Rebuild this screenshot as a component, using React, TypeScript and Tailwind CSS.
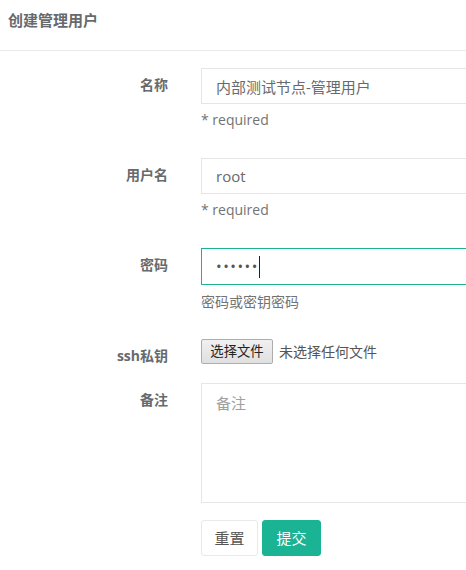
import React from 'react'

const font = "font-['Open_Sans','Noto_Sans_CJK_SC',sans-serif]"

function Label({ children }: { children: React.ReactNode }) {
  return (
    <div className="w-[168px] shrink-0 pt-[7px] text-right text-[14px] leading-5 font-bold text-[#676a6c]">
      {children}
    </div>
  )
}

export default function App() {
  return (
    <div className={`${font} w-[466px] h-[570px] overflow-hidden bg-white text-[#676a6c]`}>
      {/* 标题 */}
      <div className="h-[51px] border-b border-[#e7eaec] px-[8px] pt-[10px]">
        <h5 className="text-[15px] leading-5 font-semibold text-[#676a6c]">创建管理用户</h5>
      </div>

      <form className="pt-[17px]" onSubmit={(e) => e.preventDefault()}>
        {/* 名称 */}
        <div className="flex gap-[33px]">
          <Label>名称</Label>
          <div className="w-[320px] shrink-0">
            <input
              className="block h-[36px] w-full border border-[#e5e6e7] px-[14px] text-[15px] text-[#676a6c] outline-none"
              defaultValue="内部测试节点-管理用户"
            />
            <p className="mt-[6px] text-[14px] leading-5 text-[#737373]">* required</p>
          </div>
        </div>

        {/* 用户名 */}
        <div className="mt-[28px] flex gap-[33px]">
          <Label>用户名</Label>
          <div className="w-[320px] shrink-0">
            <input
              className="block h-[36px] w-full border border-[#e5e6e7] px-[14px] text-[15px] text-[#676a6c] outline-none"
              defaultValue="root"
            />
            <p className="mt-[6px] text-[14px] leading-5 text-[#737373]">* required</p>
          </div>
        </div>

        {/* 密码 */}
        <div className="mt-[28px] flex gap-[33px]">
          <Label>密码</Label>
          <div className="w-[320px] shrink-0">
            <div className="flex h-[37px] w-full items-center border border-[#1ab394] px-[14px] text-[#555]">
              <span className="text-[15px] tracking-[1.5px]">••••••</span>
              <span className="h-[22px] w-px bg-[#222]" />
            </div>
            <p className="mt-[7px] text-[14px] leading-5 text-[#737373]">密码或密钥密码</p>
          </div>
        </div>

        {/* ssh私钥 */}
        <div className="mt-[27px] flex gap-[33px]">
          <Label>ssh私钥</Label>
          <div className="flex h-[25px] items-center">
            <button
              type="button"
              className="h-[25px] w-[72px] rounded-[2px] border border-[#adadad] bg-gradient-to-b from-[#f0f0f0] to-[#e0e0e0] text-[13.33px] text-[#222]"
            >
              选择文件
            </button>
            <span className="ml-[6px] text-[14px] text-[#555]">未选择任何文件</span>
          </div>
        </div>

        {/* 备注 */}
        <div className="mt-[17px] flex gap-[33px]">
          <Label>备注</Label>
          <textarea
            className="block h-[120px] w-[320px] shrink-0 resize-none border border-[#e5e6e7] px-[14px] pt-[9px] text-[15px] leading-5 text-[#676a6c] placeholder:text-[#a0a0a0] outline-none"
            placeholder="备注"
          />
        </div>

        {/* 按钮 */}
        <div className="mt-[17px] flex gap-[33px]">
          <div className="w-[168px] shrink-0" />
          <div className="flex gap-[4px]">
            <button
              type="reset"
              className="h-[36px] w-[57px] rounded-[3px] border border-[#e7eaec] bg-white text-[15px] text-[#555]"
            >
              重置
            </button>
            <button
              type="submit"
              className="h-[36px] w-[59px] rounded-[3px] border border-[#1ab394] bg-[#1ab394] text-[15px] text-white"
            >
              提交
            </button>
          </div>
        </div>
      </form>
    </div>
  )
}
